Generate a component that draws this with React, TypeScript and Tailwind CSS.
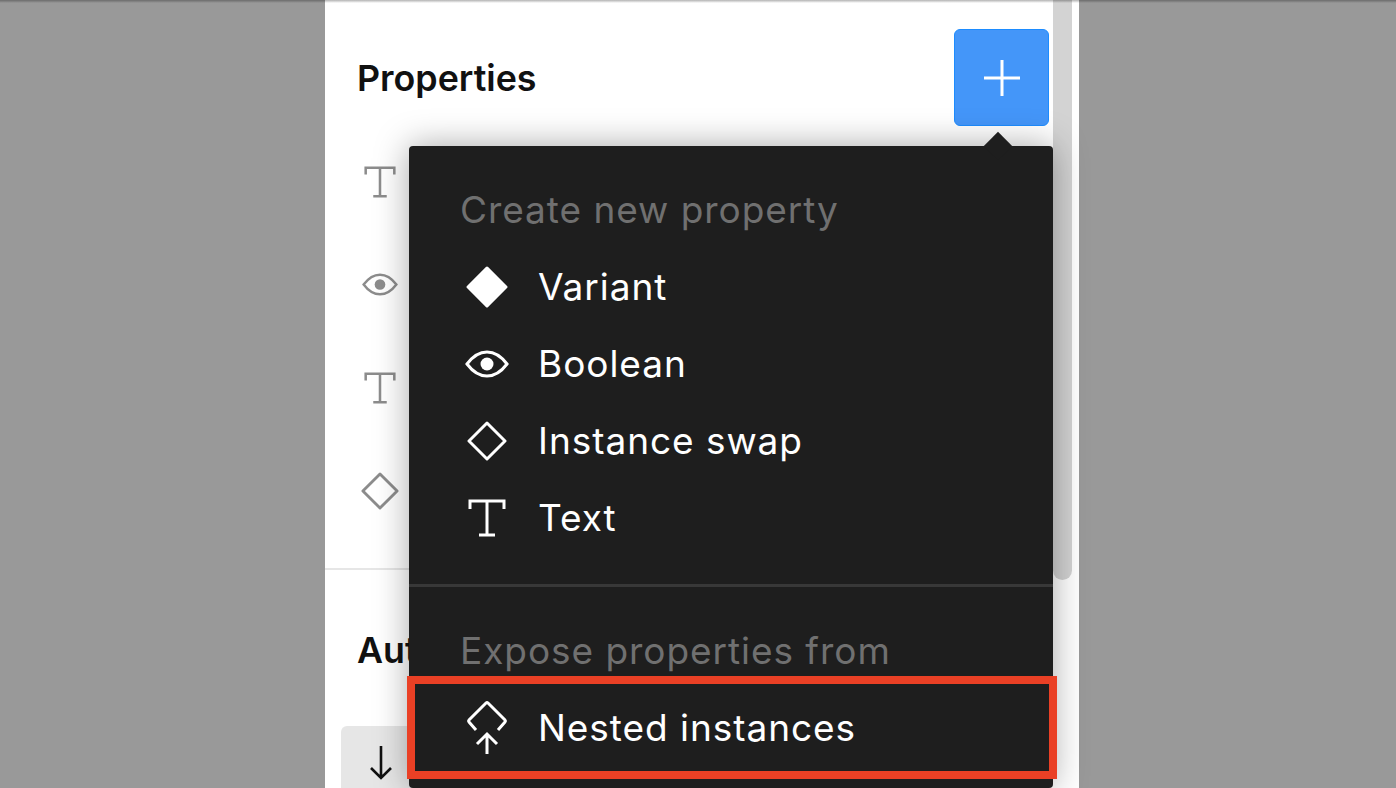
const menuFont = "font-['Inter',sans-serif]";

function TextIcon({ className }: { className?: string }) {
  return (
    <svg viewBox="0 0 38 38" fill="none" stroke="currentColor" strokeWidth="3" className={className}>
      <path d="M2 10V2h34v8M19 2v34M11 36h16" />
    </svg>
  );
}

function EyeIcon({ className }: { className?: string }) {
  return (
    <svg viewBox="0 0 44 28" fill="none" stroke="currentColor" strokeWidth="3" className={className}>
      <path d="M2 14C8 6 14 2 22 2s14 4 20 12c-6 8-12 12-20 12S8 22 2 14Z" />
      <circle cx="22" cy="14" r="6.5" fill="currentColor" stroke="none" />
    </svg>
  );
}

function DiamondIcon({ className, filled }: { className?: string; filled?: boolean }) {
  return (
    <svg viewBox="0 0 40 40" fill={filled ? "currentColor" : "none"} stroke="currentColor" strokeWidth="3" className={className}>
      <path d="M20 2 38 20 20 38 2 20Z" strokeLinejoin="round" />
    </svg>
  );
}

function NestedIcon({ className }: { className?: string }) {
  return (
    <svg viewBox="0 0 42 55" fill="none" stroke="currentColor" strokeWidth="3" className={className}>
      <path d="M10 30 3 22a1.5 1.5 0 0 1 0-2L20 3a1.5 1.5 0 0 1 2 0l17 17a1.5 1.5 0 0 1 0 2l-7 8" />
      <path d="M21 54V35M11 44l10-10 10 10" />
    </svg>
  );
}

const created = [
  { label: "Variant", icon: <DiamondIcon filled className="h-[42px] w-[42px]" /> },
  { label: "Boolean", icon: <EyeIcon className="h-[28px] w-[44px]" /> },
  { label: "Instance swap", icon: <DiamondIcon className="h-[40px] w-[40px]" /> },
  { label: "Text", icon: <TextIcon className="h-[38px] w-[38px]" /> },
];

function MenuRow({ label, icon }: { label: string; icon: React.ReactNode }) {
  return (
    <div className="flex h-[77px] items-center gap-[25px] pl-[52px] text-[37px] tracking-[0.95px] text-white">
      <div className="flex w-[52px] justify-center">{icon}</div>
      <span>{label}</span>
    </div>
  );
}

export default function App() {
  return (
    <div className={`h-[788px] w-[1396px] overflow-hidden bg-[#999999] pl-[325px] ${menuFont}`}>
      <div className="relative flex h-full w-[754px] bg-white">
        <div className="flex w-[728px] flex-col">
          <div className="flex h-[570px] shrink-0 flex-col border-b-2 border-[#e6e6e6]">
            <div className="flex items-start justify-between pl-[32px] pr-[4px] pt-[29px]">
              <h2 className="mt-[27px] text-[35.8px] leading-[44px] font-semibold text-[#111]">Properties</h2>
              <button className="flex h-[97px] w-[95px] items-center justify-center rounded-[6px] border border-[#1d8cff] bg-[#4496f9] text-white">
                <svg viewBox="0 0 36 36" className="h-[36px] w-[36px]" stroke="currentColor" strokeWidth="3">
                  <path d="M18 0v36M0 18h36" />
                </svg>
              </button>
            </div>
            <div className="ml-[37px] mt-[4px] flex w-[36px] flex-col text-[#8c8c8c]">
              <div className="flex h-[103px] items-center justify-center"><TextIcon className="h-[32px] w-[32px]" /></div>
              <div className="flex h-[103px] items-center justify-center"><EyeIcon className="h-[23px] w-[36px]" /></div>
              <div className="flex h-[103px] items-center justify-center"><TextIcon className="h-[32px] w-[32px]" /></div>
              <div className="flex h-[103px] items-center justify-center"><DiamondIcon className="h-[38px] w-[38px] shrink-0" /></div>
            </div>
          </div>
          <div className="ml-[32px] mt-[58px] shrink-0 text-[35.8px] leading-[44px] font-semibold text-[#111]">Aut</div>
          <div className="ml-[16px] mt-[54px] flex h-[80px] w-[80px] shrink-0 justify-center rounded-[6px] bg-[#e6e6e6] pt-[20px] text-[#111]">
            <svg viewBox="0 0 24 34" fill="none" stroke="currentColor" strokeWidth="2.6" className="h-[34px] w-[24px]">
              <path d="M12 0v32M2 22l10 10 10-10" />
            </svg>
          </div>
        </div>

        {/* scrollbar */}
        <div className="h-[580px] w-[19px] rounded-b-[10px] bg-[#d3d3d3]" />

        {/* top edge */}
        <div className="absolute -left-[325px] top-0 h-[3px] w-[1396px] bg-gradient-to-b from-black/30 to-transparent" />

        {/* dropdown */}
        <div className="absolute left-[84px] top-[146px] h-[642px] w-[644px] rounded-[4px] bg-[#1e1e1e] pt-[25px] shadow-[0_0_34px_rgba(0,0,0,0.35)]">
          <div className="absolute left-[579px] top-[-10px] h-[20px] w-[20px] rotate-45 bg-[#1e1e1e]" />
          <div className="relative flex h-[77px] items-center pl-[51px] text-[37px] tracking-[0.95px] text-[#707070]">Create new property</div>
          {created.map((item) => (
            <MenuRow key={item.label} label={item.label} icon={item.icon} />
          ))}
          <div className="mt-[28px] h-[3px] bg-[#383838]" />
          <div className="mt-[25px] flex h-[77px] items-center pl-[51px] text-[37px] tracking-[0.95px] text-[#707070]">Expose properties from</div>
          <MenuRow label="Nested instances" icon={<NestedIcon className="h-[55px] w-[42px]" />} />
        </div>

        {/* highlight box */}
        <div className="absolute left-[82px] top-[676px] h-[103px] w-[650px] border-[8px] border-[#ea4025]" />
      </div>
    </div>
  );
}
